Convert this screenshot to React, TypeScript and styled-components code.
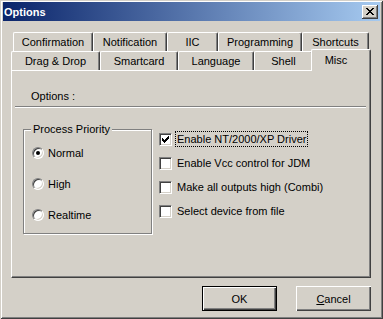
import { createGlobalStyle, styled } from 'styled-components';

const GlobalStyle = createGlobalStyle`
  html, body {
    margin: 0;
    padding: 0;
    background: #d4d0c8;
  }
  body {
    font-family: "Liberation Sans", Arial, sans-serif;
    font-size: 11px;
    color: #000;
  }
`;

const Window = styled.div`
  width: 383px;
  height: 319px;
  box-sizing: border-box;
  padding: 2px 3px 3px 3px;
  display: flex;
  flex-direction: column;
  background: #d4d0c8;
  box-shadow: inset 1px 1px #d4d0c8, inset -1px -1px #404040, inset 2px 2px #fff,
    inset -2px -2px #808080;
`;

const TitleBar = styled.div`
  height: 19px;
  display: flex;
  align-items: center;
  justify-content: space-between;
  padding: 0 2px 0 1px;
  background: linear-gradient(to right, #0a246a, #a6caf0);
`;

const Title = styled.span`
  color: #fff;
  font-weight: bold;
  font-size: 11px;
`;

const CloseButton = styled.button`
  width: 16px;
  height: 14px;
  padding: 0;
  border: none;
  display: flex;
  align-items: center;
  justify-content: center;
  background: #d4d0c8;
  box-shadow: inset -1px -1px #404040, inset 1px 1px #fff, inset -2px -2px #808080;
`;

const Body = styled.div`
  padding: 11px 0 0 8px;
  display: flex;
  flex-direction: column;
`;

const TabStrip = styled.div`
  display: flex;
  flex-direction: column;
`;

const TabRow = styled.div<{ $indent: number }>`
  display: flex;
  padding-left: ${(p) => p.$indent}px;
`;

const Tab = styled.div<{ $width: number; $active?: boolean }>`
  position: relative;
  box-sizing: border-box;
  width: ${(p) => p.$width}px;
  height: ${(p) => (p.$active ? 22 : 19)}px;
  margin: ${(p) => (p.$active ? '-2px -2px -1px -2px' : '0')};
  padding: ${(p) => (p.$active ? '0 10px 1px 0' : '0')};
  z-index: ${(p) => (p.$active ? 1 : 0)};
  display: flex;
  align-items: center;
  justify-content: center;
  background: #d4d0c8;
  border-top: 1px solid #fff;
  border-left: 1px solid #fff;
  border-right: 1px solid #404040;
  border-radius: 2px 2px 0 0;
  box-shadow: inset -1px 0 #808080;
  white-space: nowrap;
`;

const Panel = styled.div`
  width: 360px;
  height: 208px;
  box-sizing: border-box;
  display: flex;
  flex-direction: column;
  border: 1px solid;
  border-color: #fff #404040 #404040 #fff;
  box-shadow: inset -1px -1px #808080;
`;

const SectionLabel = styled.div`
  margin: 19px 0 0 19px;
  line-height: 13px;
`;

const Rule = styled.div`
  margin: 3px 4px 0 3px;
  border-top: 1px solid #808080;
  border-bottom: 1px solid #fff;
`;

const OptionsRow = styled.div`
  display: flex;
  align-items: flex-start;
  margin: 15px 0 0 11px;
`;

const GroupBox = styled.fieldset`
  width: 129px;
  box-sizing: border-box;
  margin: 0;
  padding: 10px 0 12px 8px;
  border: 1px solid #808080;
  box-shadow: inset 1px 1px #fff, 1px 1px #fff;
  display: flex;
  flex-direction: column;
  gap: 18px;
`;

const GroupLegend = styled.legend`
  padding: 0 2px;
  margin-left: -1px;
  line-height: 13px;
  background: #d4d0c8;
`;

const RadioRow = styled.label`
  display: flex;
  align-items: center;
  gap: 4px;
  height: 13px;
`;

const RadioCircle = styled.span<{ $checked?: boolean }>`
  width: 12px;
  height: 12px;
  box-sizing: border-box;
  border-radius: 50%;
  border: 1px solid;
  border-color: #808080 #fff #fff #808080;
  background: #fff;
  box-shadow: inset 1px 1px #404040, inset -1px -1px #d4d0c8;
  display: flex;
  align-items: center;
  justify-content: center;
  &::after {
    content: '';
    width: 4px;
    height: 4px;
    border-radius: 50%;
    background: ${(p) => (p.$checked ? '#000' : 'transparent')};
  }
`;

const CheckList = styled.div`
  display: flex;
  flex-direction: column;
  gap: 8px;
  margin: 8px 0 0 7px;
`;

const CheckRow = styled.label`
  display: flex;
  align-items: center;
  gap: 3px;
  height: 16px;
`;

const CheckBox = styled.span`
  width: 13px;
  height: 13px;
  box-sizing: border-box;
  border: 1px solid;
  border-color: #808080 #fff #fff #808080;
  background: #fff;
  box-shadow: inset 1px 1px #404040, inset -1px -1px #d4d0c8;
  display: flex;
  align-items: center;
  justify-content: center;
`;

const CheckLabel = styled.span<{ $focused?: boolean }>`
  padding: 0 1px;
  line-height: 14px;
  border: 1px dotted ${(p) => (p.$focused ? '#000' : 'transparent')};
  white-space: nowrap;
`;

const ButtonRow = styled.div`
  width: 360px;
  display: flex;
  justify-content: flex-end;
  gap: 19px;
  margin-top: 8px;
`;

const PushButton = styled.button<{ $default?: boolean }>`
  width: 75px;
  height: 25px;
  padding: 0;
  font: inherit;
  color: #000;
  background: #d4d0c8;
  border: ${(p) => (p.$default ? '1px solid #000' : 'none')};
  box-shadow: inset 1px 1px #fff, inset -1px -1px #404040, inset -2px -2px #808080;
`;

const tabsBack = [
  { label: 'Confirmation', width: 80 },
  { label: 'Notification', width: 74 },
  { label: 'IIC', width: 51 },
  { label: 'Programming', width: 84 },
  { label: 'Shortcuts', width: 67 },
];

const tabsFront = [
  { label: 'Drag & Drop', width: 89 },
  { label: 'Smartcard', width: 78 },
  { label: 'Language', width: 76 },
  { label: 'Shell', width: 59 },
  { label: 'Misc', width: 60, active: true },
];

const priorities = [
  { label: 'Normal', checked: true },
  { label: 'High' },
  { label: 'Realtime' },
];

const options = [
  { label: 'Enable NT/2000/XP Driver', checked: true },
  { label: 'Enable Vcc control for JDM' },
  { label: 'Make all outputs high (Combi)' },
  { label: 'Select device from file' },
];

function CloseGlyph() {
  return (
    <svg width="8" height="7" viewBox="0 0 8 7" shapeRendering="crispEdges">
      <path
        fill="#000"
        d="M0 0h2v1H0zM6 0h2v1H6zM1 1h2v1H1zM5 1h2v1H5zM2 2h4v1H2zM3 3h2v1H3zM2 4h4v1H2zM1 5h2v1H1zM5 5h2v1H5zM0 6h2v1H0zM6 6h2v1H6z"
      />
    </svg>
  );
}

function CheckGlyph() {
  return (
    <svg width="7" height="7" viewBox="0 0 7 7" shapeRendering="crispEdges">
      <path
        fill="#000"
        d="M6 0h1v3H6zM5 1h1v3H5zM4 2h1v3H4zM3 3h1v3H3zM2 4h1v3H2zM1 3h1v3H1zM0 2h1v3H0z"
      />
    </svg>
  );
}

export default function App() {
  return (
    <>
      <GlobalStyle />
      <Window>
        <TitleBar>
          <Title>Options</Title>
          <CloseButton aria-label="Close">
            <CloseGlyph />
          </CloseButton>
        </TitleBar>
        <Body>
          <TabStrip>
            <TabRow $indent={2}>
              {tabsBack.map((t) => (
                <Tab key={t.label} $width={t.width}>
                  {t.label}
                </Tab>
              ))}
            </TabRow>
            <TabRow $indent={0}>
              {tabsFront.map((t) => (
                <Tab key={t.label} $width={t.width} $active={t.active}>
                  {t.label}
                </Tab>
              ))}
            </TabRow>
          </TabStrip>
          <Panel>
            <SectionLabel>Options :</SectionLabel>
            <Rule />
            <OptionsRow>
              <GroupBox>
                <GroupLegend>Process Priority</GroupLegend>
                {priorities.map((r) => (
                  <RadioRow key={r.label}>
                    <RadioCircle $checked={r.checked} />
                    {r.label}
                  </RadioRow>
                ))}
              </GroupBox>
              <CheckList>
                {options.map((o, i) => (
                  <CheckRow key={o.label}>
                    <CheckBox>{o.checked && <CheckGlyph />}</CheckBox>
                    <CheckLabel $focused={i === 0}>{o.label}</CheckLabel>
                  </CheckRow>
                ))}
              </CheckList>
            </OptionsRow>
          </Panel>
          <ButtonRow>
            <PushButton $default>OK</PushButton>
            <PushButton>
              <u>C</u>ancel
            </PushButton>
          </ButtonRow>
        </Body>
      </Window>
    </>
  );
}
